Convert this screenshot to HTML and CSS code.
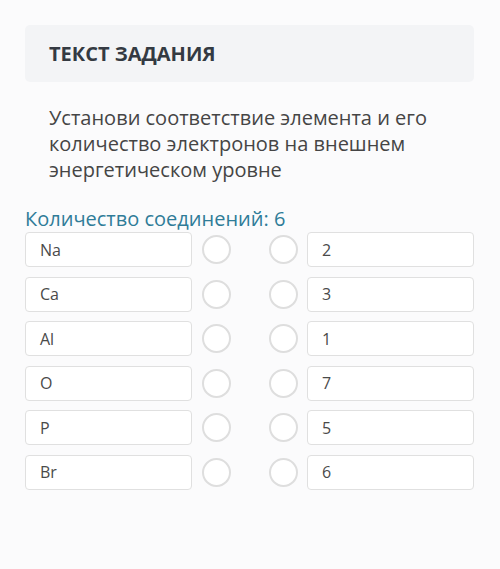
FILE: index.html
```html
<!DOCTYPE html>
<html lang="ru">
<head>
  <meta charset="UTF-8" />
  <meta name="viewport" content="width=device-width, initial-scale=1.0"/>
  <title>Задание</title>
  <link rel="stylesheet" href="styles.css">
</head>
<body>
  <div class="task">
    <div class="task-header">
      <h1>ТЕКСТ ЗАДАНИЯ</h1>
    </div>
    <p class="task-text">Установи соответствие элемента и его количество электронов на внешнем энергетическом уровне</p>
    <div class="match-count">Количество соединений: 6</div>
    <div class="match-list">
      <div class="match-row">
        <div class="match-item">Na</div>
        <div class="connectors"><span class="dot"></span><span class="dot"></span></div>
        <div class="match-item">2</div>
      </div>
      <div class="match-row">
        <div class="match-item">Ca</div>
        <div class="connectors"><span class="dot"></span><span class="dot"></span></div>
        <div class="match-item">3</div>
      </div>
      <div class="match-row">
        <div class="match-item">Al</div>
        <div class="connectors"><span class="dot"></span><span class="dot"></span></div>
        <div class="match-item">1</div>
      </div>
      <div class="match-row">
        <div class="match-item">O</div>
        <div class="connectors"><span class="dot"></span><span class="dot"></span></div>
        <div class="match-item">7</div>
      </div>
      <div class="match-row">
        <div class="match-item">P</div>
        <div class="connectors"><span class="dot"></span><span class="dot"></span></div>
        <div class="match-item">5</div>
      </div>
      <div class="match-row">
        <div class="match-item">Br</div>
        <div class="connectors"><span class="dot"></span><span class="dot"></span></div>
        <div class="match-item">6</div>
      </div>
    </div>
  </div>
</body>
</html>
```

FILE: styles.css
```css
:root {
  --page: #fbfbfc;
  --panel: #f3f4f6;
  --text: #454545;
  --title: #343a42;
  --accent: #2f7c98;
  --line: #e0e0e0;
  --ring: #dedede;
}

html, body {
  margin: 0;
  padding: 0;
  background: var(--page);
  font-family: 'Open Sans', 'Noto Sans', sans-serif;
  color: var(--text);
}

.task {
  padding: 25px 26px 0 25px;
}

.task-header {
  display: flex;
  align-items: center;
  height: 57px;
  padding: 0 24px;
  background: var(--panel);
  border-radius: 5px;
}

.task-header h1 {
  margin: 0;
  font-size: 20px;
  font-weight: 700;
  color: var(--title);
}

.task-text {
  margin: 23px 0 0;
  padding: 0 24px;
  font-size: 20px;
  line-height: 26px;
}

.match-count {
  margin-top: 23px;
  font-size: 20px;
  line-height: 26px;
  color: var(--accent);
}

.match-list {
  display: flex;
  flex-direction: column;
  gap: 9.5px;
}

.match-row {
  display: grid;
  grid-template-columns: 167px 1fr 167px;
  height: 35px;
}

.match-item {
  display: flex;
  align-items: center;
  padding: 0 14px;
  font-size: 16px;
  color: #4a4a4a;
  background: #fff;
  border: 1px solid var(--line);
  border-radius: 4px;
}

.connectors {
  display: flex;
  align-items: center;
  justify-content: space-between;
  padding: 0 9px 0 10px;
}

.dot {
  width: 25px;
  height: 25px;
  border: 2px solid var(--ring);
  border-radius: 50%;
  background: #fff;
}
```
